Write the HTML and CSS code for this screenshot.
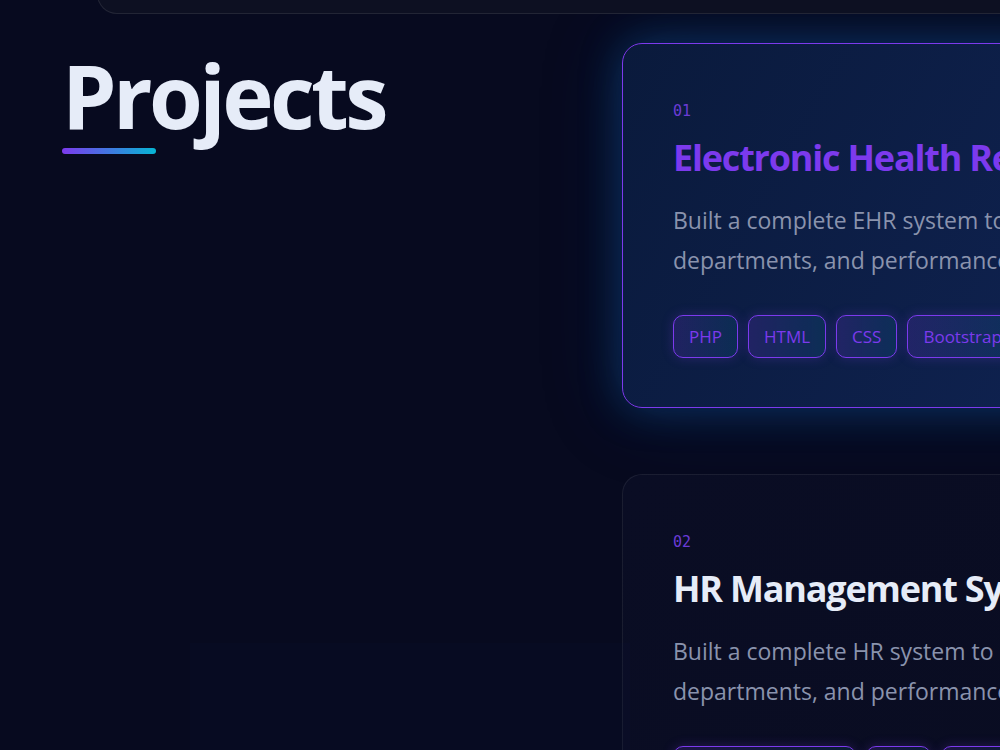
FILE: index.html
```html
<!DOCTYPE html>
<html lang="en">
<head>
    <meta charset="UTF-8">
    <meta name="viewport" content="width=device-width, initial-scale=1.0">
    <title>Projects</title>
    <link rel="stylesheet" href="styles.css">
</head>
<body>
    <nav class="navbar"></nav>
    <div class="glow-blob"></div>

    <section class="projects">
        <div class="projects-head">
            <h2 class="section-title">Projects</h2>
            <span class="title-bar"></span>
        </div>

        <div class="project-list">
            <article class="project-card active">
                <span class="project-num">01</span>
                <h3 class="project-title">Electronic Health Record System</h3>
                <p class="project-desc">Built a complete EHR system to manage patients, doctors,<br>departments, and performance reports.</p>
                <div class="tags">
                    <span class="tag">PHP</span>
                    <span class="tag">HTML</span>
                    <span class="tag">CSS</span>
                    <span class="tag">Bootstrap</span>
                    <span class="tag">MySQL</span>
                </div>
            </article>

            <article class="project-card">
                <span class="project-num">02</span>
                <h3 class="project-title">HR Management System</h3>
                <p class="project-desc">Built a complete HR system to manage employees, payroll,<br>departments, and performance reviews.</p>
                <div class="tags">
                    <span class="tag">Laravel Framework</span>
                    <span class="tag">PHP</span>
                    <span class="tag">MySQL</span>
                </div>
            </article>
        </div>
    </section>
</body>
</html>
```

FILE: styles.css
```css
body {
    margin: 0;
    padding: 0;
    background-color: #070a1f;
    font-family: "Open Sans", "Noto Sans", sans-serif;
    color: #e6ecf8;
    overflow: hidden;
    height: 750px;
    position: relative;
}

/* barra do topo, quase toda fora da tela */
.navbar {
    position: absolute;
    top: -60px;
    left: 97px;
    width: 1200px;
    height: 72px;
    background-color: #0d1022;
    border: 1px solid rgba(255, 255, 255, 0.09);
    border-radius: 20px;
    z-index: 5;
}

.glow-blob {
    position: absolute;
    left: 190px;
    top: 643px;
    width: 440px;
    height: 110px;
    background-color: rgba(14, 22, 80, 0.08);
}

.projects {
    display: grid;
    grid-template-columns: 558px 900px;
    padding: 43px 0 0 64px;
}

.projects-head {
    padding-top: 2px;
}

.section-title {
    margin: 0;
    font-size: 87px;
    font-weight: 700;
    line-height: 100px;
    letter-spacing: -3.6px;
    margin-left: -2px;
    color: #e6ecf8;
}

.title-bar {
    display: block;
    width: 94px;
    height: 6px;
    margin: 3px 0 0 -2px;
    border-radius: 3px;
    background: linear-gradient(90deg, #7c3aed, #06b6d4);
}

.project-list {
    display: flex;
    flex-direction: column;
    gap: 66px;
}

.project-card {
    display: block;
    padding: 56px 50px 49px;
    border-radius: 20px;
    border: 1px solid rgba(255, 255, 255, 0.07);
    background: linear-gradient(135deg, #0a0d24, #090c20);
}

.project-card.active {
    border-color: #7c3aed;
    background: linear-gradient(120deg, #0a1a3c, #0f2250 60%, #0d1d48);
    box-shadow: 0 0 40px rgba(14, 116, 200, 0.35), 0 0 80px rgba(10, 60, 140, 0.25);
}

.project-num {
    display: block;
    font-family: "DejaVu Sans Mono", monospace;
    font-size: 15px;
    line-height: 22px;
    color: #6a3bd6;
}

.project-title {
    margin: 12px 0 0;
    font-size: 36px;
    line-height: 48px;
    font-weight: 700;
    letter-spacing: -1.2px;
    white-space: nowrap;
    color: #e6ecf8;
}

.project-card.active .project-title {
    color: #7c3aed;
}

.project-desc {
    margin: 18px 0 0;
    font-size: 23px;
    line-height: 40px;
    color: #8a93ad;
    font-weight: 400;
}

.tags {
    display: flex;
    gap: 10px;
    margin-top: 35px;
}

.tag {
    padding: 8px 15px;
    font-size: 17px;
    line-height: 25px;
    color: #7c3aed;
    border: 1px solid #7c3aed;
    border-radius: 10px;
    background: linear-gradient(90deg, rgba(124, 58, 237, 0.18), rgba(6, 182, 212, 0.1));
    box-shadow: 0 0 12px rgba(124, 58, 237, 0.25);
    white-space: nowrap;
}
```
